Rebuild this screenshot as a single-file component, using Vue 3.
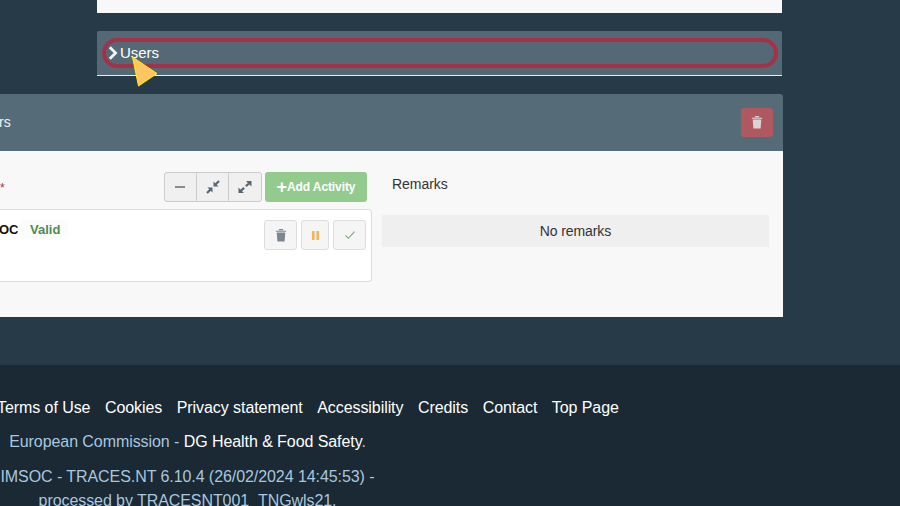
<script setup>
const links = ['Terms of Use', 'Cookies', 'Privacy statement', 'Accessibility', 'Credits', 'Contact', 'Top Page']
</script>

<template>
  <div class="page">
    <main class="main">
      <div class="top-card"></div>
      <div class="users-bar">
        <svg class="chevron" viewBox="0 0 10 14" width="10" height="14">
          <path d="M1.800 1.200 7.600 7 1.800 12.800" fill="none" stroke="#eef5fa" stroke-width="2.800" />
        </svg>
        <span>Users</span>
        <div class="highlight"></div>
        <svg class="pointer" viewBox="0 0 28 32" width="28" height="32">
          <path d="M1.500 1 26 17.500 7.500 30Z" fill="#ffc561" stroke="#fff200" stroke-width="1" />
        </svg>
      </div>
      <section class="panel">
        <header class="panel-head">
          <span>rs</span>
          <button class="del-btn" aria-label="Delete">
            <svg viewBox="0 0 14 16" width="12" height="14">
              <path d="M1 3h12v1.200H1zM5 1h4l1 1.500H4zM2 5h10L11.200 15.500H2.800z" fill="#dcd3d7" />
            </svg>
          </button>
        </header>
        <div class="panel-body">
          <div class="left-col">
            <div class="tool-row">
              <span class="req">*</span>
              <div class="btn-group">
                <button class="tool" aria-label="Collapse">
                  <svg class="minus" viewBox="0 0 14 14" width="14" height="14"><path d="M2 7h10" stroke="#555" stroke-width="1.300" /></svg>
                </button>
                <button class="tool" aria-label="Compress">
                  <svg viewBox="0 0 14 14" width="14" height="14">
                    <path d="M7.500 1.500V6.500H12.500ZM1.500 7.500H6.500V12.500Z" fill="#566673" />
                    <path d="M9.500 4.500 13 1M4.500 9.500 1 13" stroke="#566673" stroke-width="2.200" />
                  </svg>
                </button>
                <button class="tool" aria-label="Expand">
                  <svg viewBox="0 0 14 14" width="14" height="14">
                    <path d="M8 1H13.500V6.500ZM.5 7.500V13H6Z" fill="#566673" />
                    <path d="M11 3.500 7.800 6.200M3 10.500 6.200 7.800" stroke="#566673" stroke-width="2.200" />
                  </svg>
                </button>
              </div>
              <button class="add-btn"><span class="plus">+</span>Add Activity</button>
            </div>
            <div class="activity">
              <div class="activity-name">
                <strong>OC</strong>
                <span class="valid">Valid</span>
              </div>
              <div class="activity-actions">
                <button class="act wide" aria-label="Delete">
                  <svg viewBox="0 0 14 16" width="12" height="14">
                    <path d="M1 3h12v1.200H1zM5 1h4l1 1.500H4zM2 5h10L11.200 15.500H2.800z" fill="#7d8790" />
                  </svg>
                </button>
                <button class="act narrow" aria-label="Pause">
                  <svg viewBox="0 0 10 12" width="9" height="11"><path d="M1 1h3v10H1zM6 1h3v10H6z" fill="#f3b45c" /></svg>
                </button>
                <button class="act wide" aria-label="Confirm">
                  <svg viewBox="0 0 14 12" width="12" height="10"><path d="M1.500 6.500 5 10l7.500-8" fill="none" stroke="#76a878" stroke-width="1.300" /></svg>
                </button>
              </div>
            </div>
          </div>
          <div class="right-col">
            <div class="remarks-label">Remarks</div>
            <div class="remarks-empty">No remarks</div>
          </div>
        </div>
      </section>
    </main>
    <footer class="footer">
      <nav class="links">
        <a v-for="l in links" :key="l">{{ l }}</a>
      </nav>
      <div class="meta">
        <p class="org"><span class="blue">European Commission</span> - <span class="white">DG Health &amp; Food Safety</span>.</p>
        <p class="version">IMSOC - TRACES.NT 6.10.4 (26/02/2024 14:45:53) -<br />processed by TRACESNT001_TNGwls21.</p>
      </div>
    </footer>
  </div>
</template>

<style>
html, body { margin: 0; background: #273a48; }
</style>

<style scoped>
.page {
  width: 900px;
  height: 506px;
  overflow: hidden;
  display: flex;
  flex-direction: column;
  background: #273a48;
  font-family: "Liberation Sans", Arial, sans-serif;
}
.main { height: 365px; flex: none; }
.top-card { margin-left: 97px; width: 685px; height: 13px; background: #f8f8f8; }
.users-bar {
  position: relative;
  margin: 18px 0 0 97px;
  width: 685px;
  height: 44px;
  border-bottom: 1px solid #e8eef0;
  background: #546975;
  display: flex;
  align-items: center;
  color: #fff;
  font-size: 15px;
  border-radius: 2px 2px 0 0;
}
.chevron { margin-left: 11px; margin-right: 2px; margin-top: -1px; flex: none; }
.users-bar span { margin-top: -2px; letter-spacing: -.05px; }
.highlight {
  position: absolute;
  left: 5px;
  top: 7px;
  width: 676px;
  height: 30px;
  box-sizing: border-box;
  border: 4px solid #a53148;
  border-radius: 15px;
}
.pointer { position: absolute; left: 34px; top: 25px; }
.panel { margin-top: 18px; width: 783px; }
.panel-head {
  height: 57px;
  background: #566b78;
  border-radius: 0 3px 0 0;
  display: flex;
  align-items: center;
  justify-content: space-between;
  padding-right: 10px;
  color: #eef3f6;
  font-size: 14px;
}
.panel-head > span { margin: -2px 0 0 -1px; }
.del-btn {
  width: 32px;
  height: 29px;
  margin-top: -1px;
  border: 0;
  border-radius: 3px;
  background: #b0585f;
  display: flex;
  align-items: center;
  justify-content: center;
  padding: 0;
}
.panel-body {
  height: 166px;
  background: #f8f8f8;
  display: flex;
  align-items: flex-start;
}
.left-col { width: 372px; flex: none; padding-top: 21px; }
.tool-row { display: flex; align-items: center; height: 30px; padding-right: 5px; }
.req { color: #a03146; font-size: 12px; line-height: 1; margin-top: 1px; }
.btn-group {
  display: flex;
  margin-left: auto;
  height: 30px;
  box-sizing: border-box;
  border: 1px solid #ccc;
  border-radius: 3px;
  background: #f0f0f0;
}
.tool {
  width: 32px;
  border: 0;
  border-right: 1px solid #ccc;
  background: transparent;
  padding: 0;
  display: flex;
  align-items: center;
  justify-content: center;
}
.tool:last-child { border-right: 0; }
.minus { margin-left: -2px; }
.add-btn {
  width: 102px;
  height: 30px;
  margin-left: 3px;
  border: 0;
  border-radius: 3px;
  background: #92cb8d;
  color: #fff;
  font: bold 12px "Liberation Sans", Arial, sans-serif;
  letter-spacing: -.1px;
  padding: 0;
  white-space: nowrap;
}
.plus { font-size: 18px; font-weight: bold; line-height: 1; vertical-align: -2px; }
.activity {
  margin-top: 7px;
  height: 73px;
  box-sizing: border-box;
  background: #fff;
  border: 1px solid #ddd;
  border-left: 0;
  border-radius: 0 4px 4px 0;
  display: flex;
  justify-content: space-between;
  align-items: flex-start;
  padding: 10px 5px 0 0;
}
.activity-name { display: flex; align-items: center; color: #111; }
.activity-name strong { font-weight: bold; font-size: 13px; width: 22px; margin-left: -1px; }
.valid {
  color: #4f8a50;
  font-weight: bold;
  font-size: 13px;
  padding: 2px 8px 2px 9px;
  border-radius: 3px;
  background: #fbfdfb;
}
.activity-actions { display: flex; gap: 4px; }
.act {
  height: 30px;
  box-sizing: border-box;
  border: 1px solid #ddd;
  border-radius: 3px;
  background: #f5f5f5;
  padding: 0;
  display: flex;
  align-items: center;
  justify-content: center;
}
.act.wide { width: 33px; }
.act.narrow { width: 28px; }
.right-col { flex: 1; padding: 24px 14px 0 10px; }
.remarks-label { font-size: 14px; line-height: 18px; color: #333; padding-left: 10px; letter-spacing: -.05px; }
.remarks-empty {
  margin-top: 22px;
  height: 32px;
  line-height: 32px;
  background: #efefef;
  color: #333;
  font-size: 14px;
  letter-spacing: -.1px;
  text-align: center;
}
.footer { flex: 1; background: #1a2934; font-size: 16px; letter-spacing: -.07px; overflow: hidden; }
.links {
  display: flex;
  gap: 14.500px;
  margin: 34px 0 0 -3px;
  line-height: 18px;
  color: #fff;
  white-space: nowrap;
}
.meta { width: 375px; text-align: center; color: #a9c7de; white-space: nowrap; }
.meta p { margin: 0; }
.org { margin-top: 16px !important; line-height: 18px; }
.blue { color: #a9c7de; }
.white { color: #fff; }
.version { margin-top: 14px !important; line-height: 24px; }
</style>
